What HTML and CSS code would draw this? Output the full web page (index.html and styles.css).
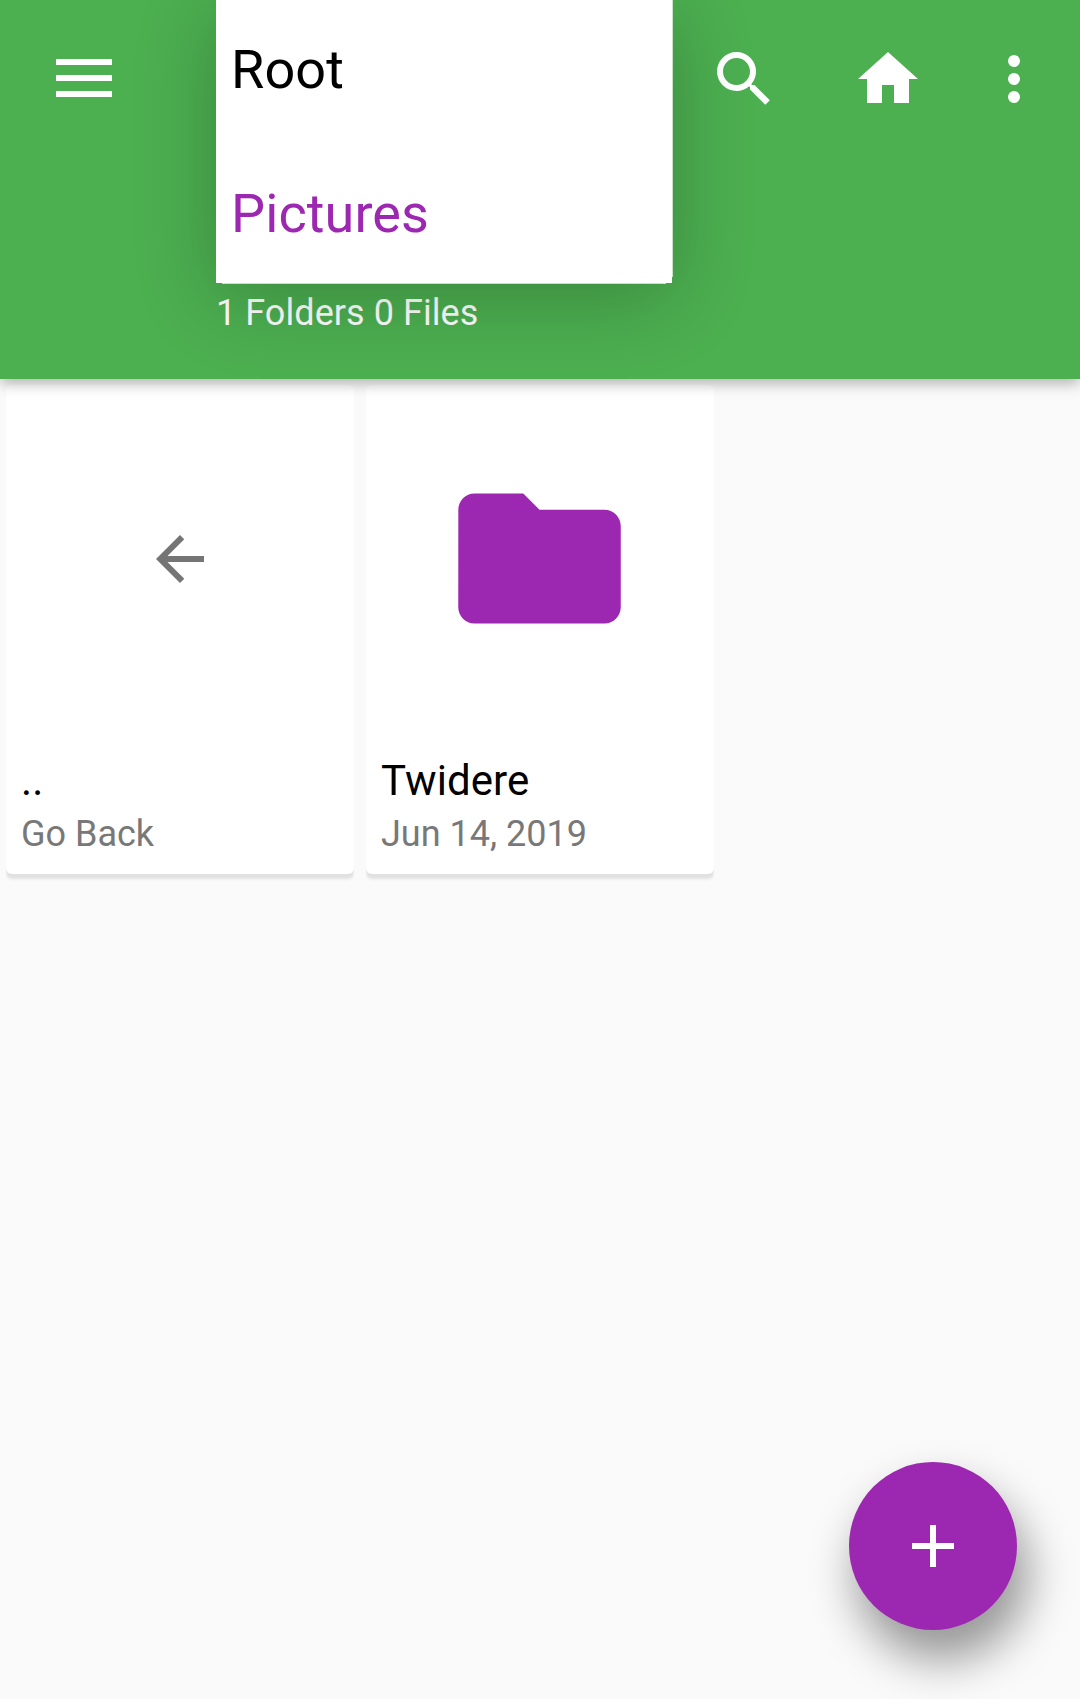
FILE: index.html
```html
<!DOCTYPE html>
<html lang="en">
<head>
<meta charset="utf-8">
<title>Pictures</title>
<link rel="stylesheet" href="styles.css">
</head>
<body>
<header class="app-bar">
  <div class="toolbar">
    <svg class="menu-icon" viewBox="0 0 56 38"><path d="M0 0h56v6H0zM0 16h56v6H0zM0 32h56v6H0z"/></svg>
    <nav class="actions">
      <svg class="icon search-icon" viewBox="0 0 24 24"><path d="M15.5 14h-.79l-.28-.27A6.471 6.471 0 0 0 16 9.5 6.5 6.5 0 1 0 9.5 16c1.61 0 3.09-.59 4.23-1.57l.27.28v.79l5.1 5.1L20.6 19.1l-5.1-5.1zm-6 0C7.01 14 5 11.99 5 9.5S7.01 5 9.5 5 14 7.01 14 9.5 11.99 14 9.5 14z"/></svg>
      <svg class="icon home-icon" viewBox="0 0 24 24"><path d="M10 20v-6h4v6h5v-8h3L12 3 2 12h3v8z"/></svg>
      <svg class="icon" viewBox="0 0 24 24"><circle cx="12" cy="6" r="2"/><circle cx="12" cy="12" r="2"/><circle cx="12" cy="18" r="2"/></svg>
    </nav>
  </div>
  <p class="summary">1 Folders 0 Files</p>
  <ul class="path-menu">
    <li class="path-item">Root</li>
    <li class="path-item selected">Pictures</li>
  </ul>
</header>
<main class="grid">
  <article class="card">
    <div class="thumb"><svg class="back-icon" viewBox="0 0 24 24"><path d="M20 11H7.83l5.59-5.59L12 4l-8 8 8 8 1.42-1.41L7.83 13H20z"/></svg></div>
    <h2 class="name">..</h2>
    <p class="detail">Go Back</p>
  </article>
  <article class="card">
    <div class="thumb"><svg class="folder-icon" viewBox="0 0 24 24"><path d="M10 4H4c-1.1 0-1.99.9-1.99 2L2 18c0 1.1.9 2 2 2h16c1.1 0 2-.9 2-2V8c0-1.1-.9-2-2-2h-8l-2-2z"/></svg></div>
    <h2 class="name">Twidere</h2>
    <p class="detail">Jun 14, 2019</p>
  </article>
</main>
<button class="fab" aria-label="Add"><svg class="plus-icon" viewBox="0 0 14 14"><path d="M14 8H8v6H6V8H0V6h6V0h2v6h6z"/></svg></button>
</body>
</html>
```
FILE: styles.css
```css
* {
  box-sizing: border-box;
  margin: 0;
  padding: 0;
}

body {
  min-height: 1699px;
  background: #fafafa;
  font-family: Roboto, "Liberation Sans", sans-serif;
  overflow: hidden;
}

svg {
  display: block;
  flex: none;
}

.app-bar {
  position: relative;
  z-index: 1;
  height: 379px;
  background: #4caf50;
  box-shadow: 0 4px 14px rgba(0, 0, 0, 0.31);
}

.toolbar {
  display: flex;
  align-items: center;
  justify-content: space-between;
  height: 158px;
  padding: 0 30px 0 56px;
  fill: #fff;
}

.menu-icon {
  width: 56px;
  height: 38px;
  margin-top: -2px;
}

.actions {
  display: flex;
}

.icon {
  width: 72px;
  height: 72px;
}

.search-icon {
  margin-right: 72px;
}

.home-icon {
  margin-right: 54px;
}

.summary {
  margin: 134px 0 0 216px;
  color: #fff;
  font-size: 36px;
  letter-spacing: 0.06px;
  line-height: 42px;
}

.path-menu {
  position: absolute;
  top: 0;
  left: 216px;
  width: 456px;
  height: 283px;
  background: #fff;
  box-shadow: 0 14px 76px rgba(0, 0, 0, 0.23);
  list-style: none;
}

/* Soft trailing edges of the popup */
.path-menu::before,
.path-menu::after {
  content: "";
  position: absolute;
  background: rgba(255, 255, 255, 0.7);
}

.path-menu::before {
  top: 100%;
  left: 6px;
  right: 6px;
  height: 1px;
}

.path-menu::after {
  top: 0;
  bottom: 6px;
  left: 100%;
  width: 1px;
}

.path-item {
  height: 144px;
  padding-left: 15px;
  color: #000;
  font-size: 54px;
  letter-spacing: 0.1px;
  line-height: 140px;
}

.path-item.selected {
  color: #9c27b0;
}

.grid {
  display: grid;
  grid-template-columns: repeat(3, 348px);
  gap: 12px;
  padding: 6px;
}

.card {
  height: 489px;
  background: #fff;
  border-radius: 6px;
  box-shadow: 0 5px 3px rgba(0, 0, 0, 0.1);
  clip-path: inset(0 0 -12px);
}

.thumb {
  display: flex;
  align-items: center;
  justify-content: center;
  height: 348px;
}

.back-icon {
  width: 72px;
  height: 72px;
  fill: #757575;
}

.folder-icon {
  width: 195px;
  height: 195px;
  margin: 0 1px 1px 0;
  fill: #9c27b0;
}

.name,
.detail {
  padding-left: 15px;
  font-weight: 400;
}

.name {
  margin-top: 23px;
  color: #000;
  font-size: 42px;
  letter-spacing: 0.1px;
  line-height: 50px;
}

.detail {
  margin-top: 7px;
  color: #787878;
  font-size: 36px;
  line-height: 42px;
}

.fab {
  position: fixed;
  right: 63px;
  bottom: 69px;
  display: flex;
  align-items: center;
  justify-content: center;
  width: 168px;
  height: 168px;
  border: 0;
  border-radius: 50%;
  background: #9c27b0;
  box-shadow: 9px 28px 46px 2px rgba(0, 0, 0, 0.4);
}

.plus-icon {
  width: 42px;
  height: 42px;
  fill: #fff;
}
```
